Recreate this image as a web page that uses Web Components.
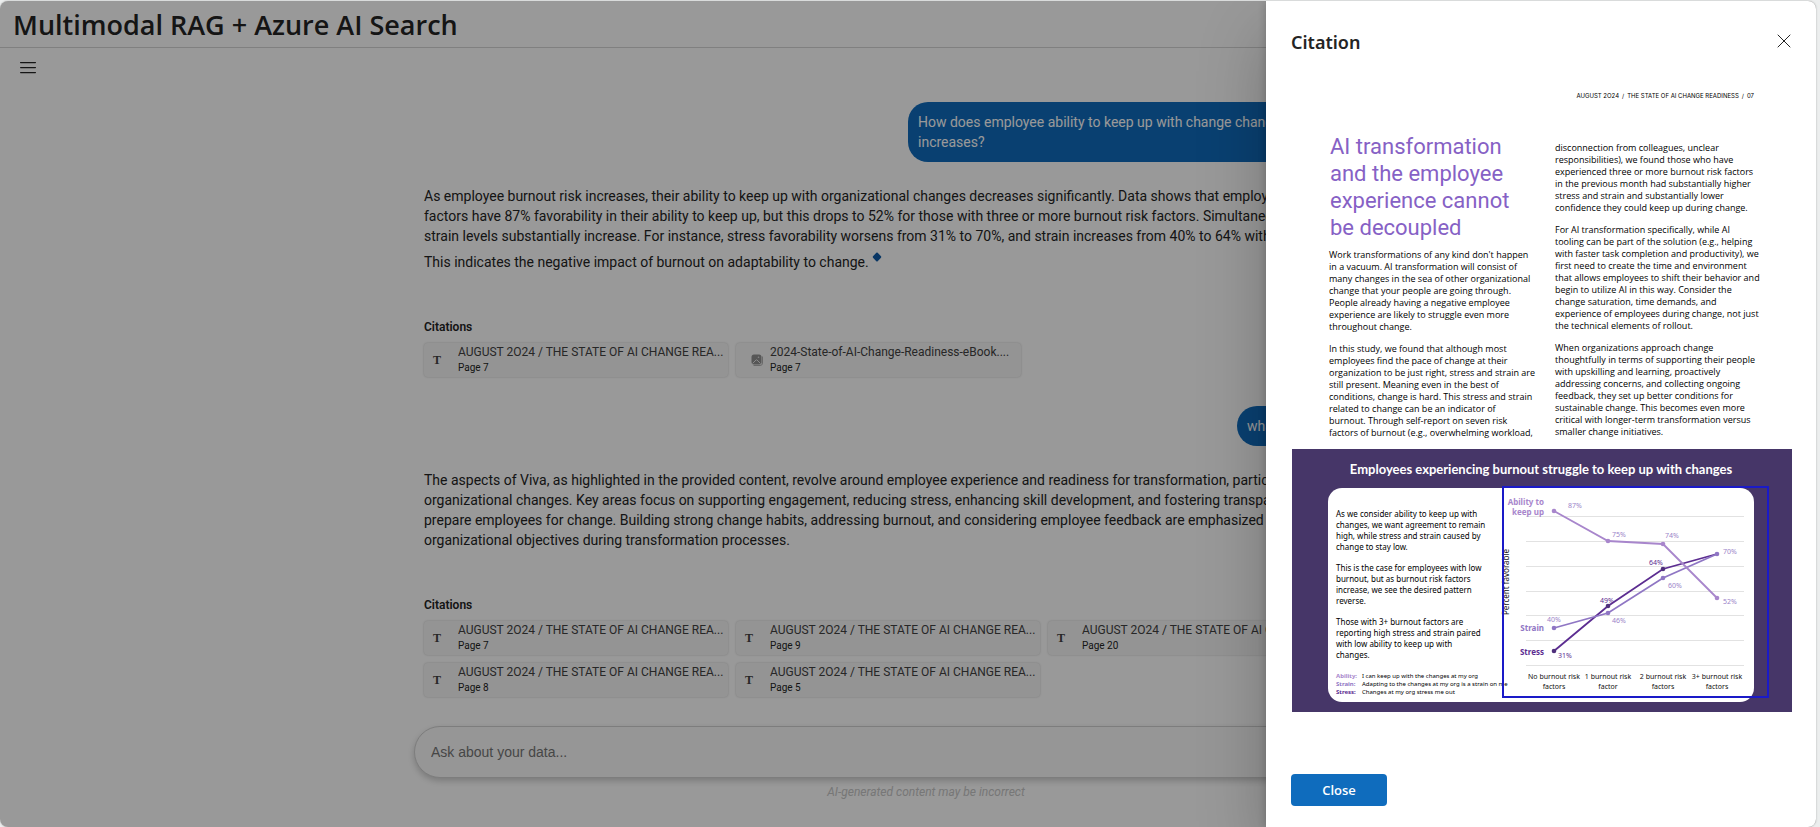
<!DOCTYPE html>
<html lang="en">
<head>
<meta charset="utf-8">
<title>Multimodal RAG + Azure AI Search</title>
<style>
  html, body { height: 100%; }
  body {
    margin: 0;
    background: #eceeee;
    color: #242424;
    font: 14px/20px Roboto, "Noto Sans", sans-serif;
    overflow: hidden;
  }
</style>
</head>
<body>
<app-shell>
  <app-header slot="header">Multimodal RAG + Azure AI Search</app-header>
  <chat-thread>
    <user-message>How does employee ability to keep up with change change as<br>increases?</user-message>
    <assistant-message>
      As employee burnout risk increases, their ability to keep up with organizational changes decreases significantly. Data shows that employees<br>
      factors have 87% favorability in their ability to keep up, but this drops to 52% for those with three or more burnout risk factors. Simultaneously,<br>
      strain levels substantially increase. For instance, stress favorability worsens from 31% to 70%, and strain increases from 40% to 64% with more.
      <span slot="closing">This indicates the negative impact of burnout on adaptability to change.</span>
      <citation-list slot="citations">
        <citation-card page="7">AUGUST 2O24 / THE STATE OF AI CHANGE REA...</citation-card>
        <citation-card kind="image" page="7">2024-State-of-AI-Change-Readiness-eBook....</citation-card>
      </citation-list>
    </assistant-message>
    <user-message>what is Viva?</user-message>
    <assistant-message>
      The aspects of Viva, as highlighted in the provided content, revolve around employee experience and readiness for transformation, particularly<br>
      organizational changes. Key areas focus on supporting engagement, reducing stress, enhancing skill development, and fostering transparency to<br>
      prepare employees for change. Building strong change habits, addressing burnout, and considering employee feedback are emphasized for<br>
      organizational objectives during transformation processes.
      <citation-list slot="citations">
        <citation-card page="7">AUGUST 2O24 / THE STATE OF AI CHANGE REA...</citation-card>
        <citation-card page="9">AUGUST 2O24 / THE STATE OF AI CHANGE REA...</citation-card>
        <citation-card page="20">AUGUST 2O24 / THE STATE OF AI CHANGE REA...</citation-card>
        <citation-card page="8">AUGUST 2O24 / THE STATE OF AI CHANGE REA...</citation-card>
        <citation-card page="5">AUGUST 2O24 / THE STATE OF AI CHANGE REA...</citation-card>
      </citation-list>
    </assistant-message>
    <chat-input slot="composer"></chat-input>
  </chat-thread>
  <citation-drawer slot="drawer">
    <span slot="title">Citation</span>
    <document-page></document-page>
  </citation-drawer>
</app-shell>

<script>
const define = (name, html, setup) => {
  const template = document.createElement('template');
  template.innerHTML = html;
  customElements.define(name, class extends HTMLElement {
    constructor() {
      super();
      this.attachShadow({ mode: 'open' }).append(template.content.cloneNode(true));
    }
    connectedCallback() {
      if (setup) setup(this, this.shadowRoot);
    }
  });
};

define('app-shell', `
<style>
  :host {
    display: flex; flex-direction: column; position: relative; overflow: hidden;
    height: calc(100vh - 1px); margin: 1px 4px 0 0; border-radius: 8px;
    background: #fff; box-shadow: 0 0 2px rgba(0,0,0,.3);
  }
  .toolbar { padding: 4px 12px 0; }
  .toolbar button {
    display: grid; place-items: center; width: 32px; height: 32px; padding: 0;
    border: 0; background: none; color: #242424;
  }
  main { flex: 1; min-height: 0; padding: 18px 0 0 36px; }
  .backdrop { position: absolute; inset: 0; background: rgba(0,0,0,.4); }
</style>
<slot name="header"></slot>
<div class="toolbar">
  <button type="button" aria-label="Open menu">
    <svg width="16" height="12" viewBox="0 0 16 12" stroke="currentColor" stroke-width="1.250" stroke-linecap="round"><path d="M.6 .6h14.800M.6 5.600h14.800M.6 10.600h14.800"/></svg>
  </button>
</div>
<main><slot></slot></main>
<div class="backdrop"></div>
<slot name="drawer"></slot>`);

define('app-header', `
<style>
  :host { display: block; border-bottom: 1px solid #d6d6d6; padding: 6px 13px 4px; }
  h1 { margin: 0; font: 600 27px/36px "Open Sans", sans-serif; white-space: nowrap; }
</style>
<h1><slot></slot></h1>`);

define('chat-thread', `
<style>
  :host { display: block; max-width: 1024px; margin: 0 auto; }
  .log { display: flex; flex-direction: column; gap: 24px; padding: 0 10px; margin-bottom: 29px; }
</style>
<div class="log"><slot></slot></div>
<slot name="composer"></slot>`);

define('user-message', `
<style>
  :host {
    display: block; align-self: flex-end; box-sizing: border-box; min-width: 191px; max-width: 520px;
    padding: 10px; border-radius: 20px; background: #0f6cbd; color: #fff; white-space: nowrap;
  }
  :host(:first-of-type) { width: 520px; }
  :host(:not(:first-of-type)) { margin-top: 5px; }
</style>
<slot></slot>`);

define('assistant-message', `
<style>
  :host { display: block; white-space: nowrap; }
  p { margin: 0; }
  .closing { margin-top: 6px; }
  svg { vertical-align: 5px; }
  .cites { margin-top: 47px; }
</style>
<p><slot></slot></p>
<p class="closing"><slot name="closing"></slot>
  <svg width="10" height="10" viewBox="0 0 10 10" fill="#0f5ba7"><path d="M4.300.8Q5 0 5.700.8L9 4.300Q9.500 5 9 5.700L5.700 9.200Q5 10 4.300 9.200L1 5.700Q.5 5 1 4.300Z"/></svg>
</p>
<div class="cites"><slot name="citations"></slot></div>`,
(host, root) => {
  if (!host.querySelector('[slot=closing]')) root.querySelector('.closing').remove();
});

define('citation-list', `
<style>
  :host { display: block; }
  h2 { margin: 0 0 8px; font: 600 12px/16px Roboto, sans-serif; }
  .cards { display: flex; flex-wrap: wrap; gap: 8px; }
</style>
<h2>Citations</h2>
<div class="cards"><slot></slot></div>`);

define('citation-card', `
<style>
  :host { display: block; width: 304px; }
  :host([kind=image]) { width: 285px; }
  button {
    display: grid; grid-template-columns: 34px 1fr; align-items: center; box-sizing: border-box;
    width: 100%; height: 34px; padding: 0; border: 0; border-radius: 4px; text-align: left;
    background: #f7f7f7; color: #424242; box-shadow: 0 0 2px rgba(0,0,0,.14), 0 0 3px rgba(0,0,0,.08);
    font: 12px/16px Roboto, sans-serif; white-space: nowrap;
  }
  .icon { display: flex; padding-left: 9px; font: bold 12px/16px "Liberation Serif", "DejaVu Serif", serif; }
  :host([kind=image]) .icon { padding-left: 15px; }
  .page { display: block; color: #242424; font-size: 10px; line-height: 16px; }
</style>
<button type="button">
  <span class="icon"></span>
  <span><slot></slot><span class="page"></span></span>
</button>`,
(host, root) => {
  root.querySelector('.page').textContent = 'Page ' + host.getAttribute('page');
  const icon = root.querySelector('.icon');
  if (host.getAttribute('kind') === 'image') {
    icon.innerHTML = `<svg width="12" height="12" viewBox="0 0 12 12"><rect x=".5" y=".5" width="10" height="10" rx="2.500" fill="#8f8f8f"/><path d="M11.500 2.500v6.500a2.500 2.500 0 0 1-2.500 2.500H2.500" fill="none" stroke="#b0b0b0"/><circle cx="7.500" cy="3.300" r=".8" fill="#e0e0e0"/><path d="M1.500 9.500 5 6Q5.500 5.500 6 6l3.500 3.500" fill="none" stroke="#e4e4e4"/></svg>`;
  } else {
    icon.textContent = 'T';
  }
});

define('chat-input', `
<style>
  :host { display: block; }
  input {
    display: block; box-sizing: border-box; width: 100%; height: 52px; padding: 0 16px;
    border: 1px solid #d1d1d1; border-radius: 26px; background: #fafafa; outline: 0;
    box-shadow: 0 3px 6px rgba(0,0,0,.2); font: 14px/20px "Liberation Sans", Arial, sans-serif;
  }
  input::placeholder { color: #767676; opacity: 1; }
  p { margin: 6px 0 0; text-align: center; color: #c6c6c6; font: italic 12px/16px Roboto, sans-serif; }
</style>
<input type="text" aria-label="Ask about your data" placeholder="Ask about your data...">
<p>AI-generated content may be incorrect</p>`);

define('citation-drawer', `
<style>
  :host {
    display: flex; flex-direction: column; position: absolute; top: 0; right: 0; bottom: 0;
    width: 550px; max-width: 100%; background: #fff;
    box-shadow: 0 0 8px rgba(0,0,0,.2), 0 32px 64px rgba(0,0,0,.24);
  }
  header { display: flex; justify-content: space-between; align-items: flex-start; padding: 24px 16px 0 25px; }
  h2 { margin: 5px 0 0; font: 600 18px/24px "Noto Sans", sans-serif; }
  .x { display: grid; place-items: center; width: 32px; height: 32px; padding: 0; border: 0; background: none; color: #242424; }
  .body { flex: 1; min-height: 0; padding: 22px 24px 0 26px; }
  footer { padding: 0 24px 21px 25px; }
  .close {
    width: 96px; height: 32px; border: 0; border-radius: 4px; background: #0f6cbd; color: #fff;
    font: 600 13px/20px "Open Sans", sans-serif;
  }
</style>
<header>
  <h2><slot name="title"></slot></h2>
  <button class="x" type="button" aria-label="Dismiss">
    <svg width="14" height="14" viewBox="0 0 14 14" stroke="currentColor" stroke-linecap="round"><path d="M1 1l12 12M13 1 1 13"/></svg>
  </button>
</header>
<div class="body"><slot></slot></div>
<footer><button class="close" type="button">Close</button></footer>`);

define('document-page', `
<style>
  :host { display: block; color: #000; }
  .running { display: flex; justify-content: flex-end; gap: 3px; padding: 13px 38px 33px 0; font: 6px/8px Inter, sans-serif; }
  .text { display: grid; grid-template-columns: 226px 1fr; padding: 0 0 10px 37px; font: 9px/12px "Open Sans", sans-serif; white-space: nowrap; }
  h3 { margin: 0 0 8px 1px; color: #8661c5; font: 400 22px/27px Roboto, sans-serif; }
  .right { padding-top: 9px; }
  p { margin: 0; }
  p + p { margin-top: 10px; }
</style>
<div class="running"><span>AUGUST 2O24</span><span>/</span><span>THE STATE OF AI CHANGE READINESS</span><span>/</span><span>07</span></div>
<div class="text">
  <div>
    <h3>AI transformation<br>and the employee<br>experience cannot<br>be decoupled</h3>
    <p>Work transformations of any kind don't happen<br>in a vacuum. AI transformation will consist of<br>many changes in the sea of other organizational<br>change that your people are going through.<br>People already having a negative employee<br>experience are likely to struggle even more<br>throughout change.</p>
    <p>In this study, we found that although most<br>employees find the pace of change at their<br>organization to be just right, stress and strain are<br>still present. Meaning even in the best of<br>conditions, change is hard. This stress and strain<br>related to change can be an indicator of<br>burnout. Through self-report on seven risk<br>factors of burnout (e.g., overwhelming workload,</p>
  </div>
  <div class="right">
    <p>disconnection from colleagues, unclear<br>responsibilities), we found those who have<br>experienced three or more burnout risk factors<br>in the previous month had substantially higher<br>stress and strain and substantially lower<br>confidence they could keep up during change.</p>
    <p>For AI transformation specifically, while AI<br>tooling can be part of the solution (e.g., helping<br>with faster task completion and productivity), we<br>first need to create the time and environment<br>that allows employees to shift their behavior and<br>begin to utilize AI in this way. Consider the<br>change saturation, time demands, and<br>experience of employees during change, not just<br>the technical elements of rollout.</p>
    <p>When organizations approach change<br>thoughtfully in terms of supporting their people<br>with upskilling and learning, proactively<br>addressing concerns, and collecting ongoing<br>feedback, they set up better conditions for<br>sustainable change. This becomes even more<br>critical with longer-term transformation versus<br>smaller change initiatives.</p>
  </div>
</div>
<burnout-figure></burnout-figure>`);

define('burnout-figure', `
<style>
  :host { display: block; position: relative; padding: 10px 38px 10px 36px; background: #463668; }
  h4 { margin: 0 0 9px; text-align: center; color: #fff; font: 700 13px/20px Lato, sans-serif; white-space: nowrap; }
  .panel { display: flex; height: 214px; border-radius: 14px; background: #fff; font: 8px/11px "Noto Sans", sans-serif; white-space: nowrap; }
  .notes { width: 162px; padding: 20px 0 0 8px; }
  p { margin: 0 0 10px; }
  dl { display: grid; grid-template-columns: 26px 1fr; margin: 12px 0 0; font-size: 6px; line-height: 8px; }
  dt { font-weight: 700; }
  dd { margin: 0; }
  .ability { color: #a886cc; }
  .strain { color: #8f76c4; }
  .stress { color: #5c2d91; }
  .region { position: absolute; left: 210px; top: 37px; width: 263px; height: 208px; border: 2px solid #1a1ac8; }
</style>
<h4>Employees experiencing burnout struggle to keep up with changes</h4>
<div class="panel">
  <div class="notes">
    <p>As we consider ability to keep up with<br>changes, we want agreement to remain<br>high, while stress and strain caused by<br>change to stay low.</p>
    <p>This is the case for employees with low<br>burnout, but as burnout risk factors<br>increase, we see the desired pattern<br>reverse.</p>
    <p>Those with 3+ burnout factors are<br>reporting high stress and strain paired<br>with low ability to keep up with<br>changes.</p>
    <dl>
      <dt class="ability">Ability:</dt><dd>I can keep up with the changes at my org</dd>
      <dt class="strain">Strain:</dt><dd>Adapting to the changes at my org is a strain on me</dd>
      <dt class="stress">Stress:</dt><dd>Changes at my org stress me out</dd>
    </dl>
  </div>
  <burnout-chart></burnout-chart>
</div>
<div class="region"></div>`);

define('burnout-chart', `
<style>
  :host { display: block; flex: 1; }
  svg { display: block; width: 256px; height: 214px; overflow: visible; }
  text { font: 7px "Noto Sans", sans-serif; fill: #111; }
  .name { font-size: 8px; font-weight: 700; text-anchor: end; }
  .mid text { text-anchor: middle; }
  .values text { fill: #9b84c9; }
  .values .dark { fill: #5c2d91; }
  .axis { font-size: 8px; text-anchor: middle; }
</style>
<svg viewBox="0 0 256 214" role="img" aria-label="Percent favorable by number of burnout risk factors">
  <path d="M28 28.500H246M28 53.500H246M28 78.500H246M28 103.500H246M28 127.500H246M28 152.500H246M28 177.500H246" stroke="#e2e2e2"/>
  <g fill="none" stroke-width="1.800">
    <path d="M56 163 110 118 165 81 219 66" stroke="#5c2d91"/>
    <path d="M56 140 110 125 165 90 219 66" stroke="#8f76c4"/>
    <path d="M56 23 110 53 165 56 219 110" stroke="#a886cc"/>
  </g>
  <g fill="#50307c"><circle cx="56" cy="163" r="2.300"/><circle cx="110" cy="118" r="2.300"/><circle cx="165" cy="81" r="2.300"/></g>
  <g fill="#8f76c4"><circle cx="56" cy="140" r="2.300"/><circle cx="110" cy="125" r="2.300"/><circle cx="165" cy="90" r="2.300"/><circle cx="219" cy="66" r="2.300"/></g>
  <g fill="#a886cc"><circle cx="56" cy="23" r="2.300"/><circle cx="110" cy="53" r="2.300"/><circle cx="165" cy="56" r="2.300"/><circle cx="219" cy="110" r="2.300"/></g>
  <text class="name" style="fill:#a886cc" x="46" y="17">Ability to</text>
  <text class="name" style="fill:#a886cc" x="46" y="27">keep up</text>
  <text class="name" style="fill:#8f76c4" x="46" y="143">Strain</text>
  <text class="name" style="fill:#5c2d91" x="46" y="167">Stress</text>
  <g class="values">
    <text x="70" y="20">87%</text><text x="114" y="49">75%</text><text x="167" y="50">74%</text><text x="225" y="66">70%</text>
    <text x="225" y="116">52%</text><text class="dark" x="151" y="77">64%</text><text x="170" y="100">60%</text>
    <text class="dark" x="102" y="115">49%</text><text x="114" y="135">46%</text><text x="49" y="134">40%</text><text class="dark" x="60" y="170">31%</text>
  </g>
  <g class="mid">
    <text x="56" y="191">No burnout risk</text><text x="56" y="201">factors</text>
    <text x="110" y="191">1 burnout risk</text><text x="110" y="201">factor</text>
    <text x="165" y="191">2 burnout risk</text><text x="165" y="201">factors</text>
    <text x="219" y="191">3+ burnout risk</text><text x="219" y="201">factors</text>
  </g>
  <text class="axis" transform="translate(11 94) rotate(-90)">Percent favorable</text>
</svg>`);
</script>
</body>
</html>
